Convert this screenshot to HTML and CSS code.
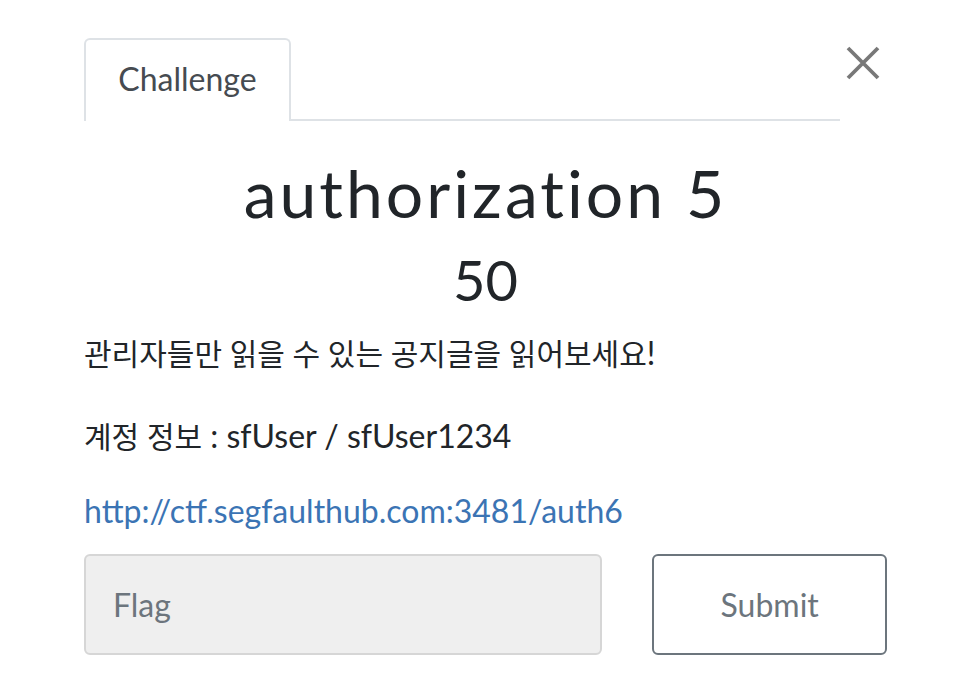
FILE: index.html
```html
<!DOCTYPE html>
<html>
<head>
  <title>authorization 5</title>
  <link rel="stylesheet" href="styles.css">
</head>
<body>
<div class="modal">
  <div class="modal-top">
    <ul class="tabs">
      <li class="tab active">Challenge</li>
    </ul>
    <button class="close" aria-label="Close">
      <svg width="34" height="34" viewBox="0 0 34 34"><path d="M2 2 L32 32 M32 2 L2 32" stroke="#787878" stroke-width="3.8" fill="none"/></svg>
    </button>
  </div>
  <h2 class="challenge-name">authorization 5</h2>
  <h3 class="challenge-value">50</h3>
  <div class="challenge-desc">
    <p class="intro"><span class="ko">관리자들만 읽을 수 있는 공지글을 읽어보세요</span>!</p>
    <p class="account"><span class="ko">계정 정보</span> : sfUser / sfUser1234</p>
    <p class="link"><a href="#">http://ctf.segfaulthub.com:3481/auth6</a></p>
  </div>
  <div class="submit-row">
    <input class="flag-input" type="text" placeholder="Flag">
    <button class="submit-btn">Submit</button>
  </div>
</div>
</body>
</html>
```

FILE: styles.css
```css
body {
  margin: 0;
  background: #fff;
  font-family: 'Lato', 'Noto Sans CJK KR', sans-serif;
  color: #212529;
}
.modal {
  width: 803px;
  padding: 38px 0 0 84px;
}
.modal-top {
  display: flex;
  align-items: flex-start;
}
.tabs {
  list-style: none;
  margin: 0;
  padding: 0;
  display: flex;
  width: 756px;
  border-bottom: 2px solid #dee2e6;
}
.tab {
  width: 207px;
  height: 83px;
  padding-bottom: 4px;
  box-sizing: border-box;
  display: flex;
  align-items: center;
  justify-content: center;
  font-size: 32px;
  color: #464b51;
  border: 2px solid #dee2e6;
  border-bottom: none;
  border-radius: 6px 6px 0 0;
  margin-bottom: -2px;
  background: #fff;
}
.close {
  margin-left: auto;
  margin-top: 8px;
  margin-right: 7px;
  background: none;
  border: 0;
  padding: 0;
  cursor: pointer;
}
.challenge-name {
  text-align: center;
  font-weight: 400;
  font-size: 66px;
  letter-spacing: 3px;
  margin: 32px 0 0;
  line-height: 1.2;
}
.challenge-value {
  text-align: center;
  font-weight: 400;
  font-size: 56px;
  margin: 14px 0 0;
  line-height: 1.2;
}
.challenge-desc {
  font-size: 32px;
  margin-top: 22px;
}
.challenge-desc .ko {
  font-size: 30px;
}
.challenge-desc p {
  margin: 0;
  line-height: 36px;
}
.challenge-desc .intro {
  margin-bottom: 47px;
}
.challenge-desc .account {
  margin-bottom: 39px;
}
.challenge-desc .link {
  margin-bottom: 25px;
}
.challenge-desc a {
  color: #3b74b4;
  text-decoration: none;
}
.submit-row {
  display: flex;
  gap: 50px;
}
.flag-input {
  width: 519px;
  height: 101px;
  box-sizing: border-box;
  background: #efefef;
  border: 2px solid #d6d6d6;
  border-radius: 6px;
  font-family: inherit;
  font-size: 32px;
  padding: 0 27px;
  color: #495057;
}
.flag-input::placeholder {
  color: #6c757d;
}
.submit-btn {
  width: 235px;
  height: 101px;
  background: #fff;
  border: 2px solid #6c757d;
  border-radius: 6px;
  font-family: inherit;
  font-size: 32px;
  color: #6c757d;
}
```
